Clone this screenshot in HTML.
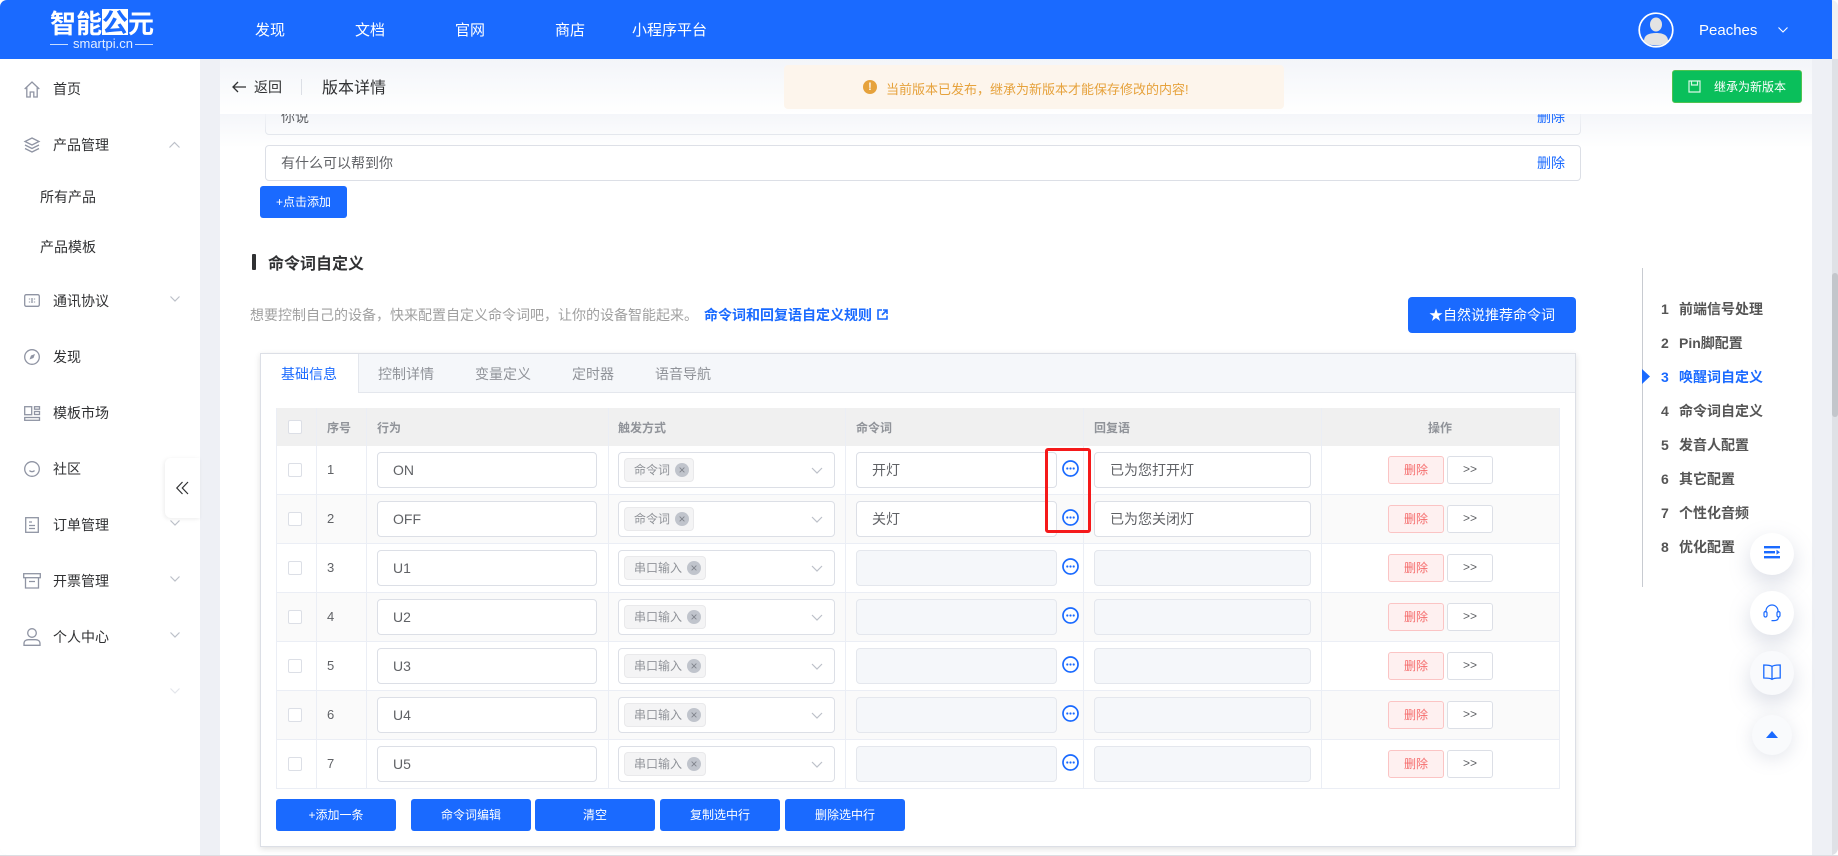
<!DOCTYPE html>
<html lang="zh-CN">
<head>
<meta charset="utf-8">
<title>版本详情</title>
<style>
*{box-sizing:border-box;margin:0;padding:0}
html,body{width:1838px;height:856px;overflow:hidden;background:#fff}
body{position:relative;font-family:"Liberation Sans","Noto Sans CJK SC",sans-serif;font-size:14px;color:#333}
.a{position:absolute}
.t{position:absolute;white-space:nowrap;line-height:20px;height:20px}
svg{position:absolute;display:block;overflow:visible}
#app{position:absolute;left:0;top:0;width:1838px;height:855px;overflow:hidden;border-radius:7px 7px 7px 7px;background:#eef0f5}
.nav{color:#fff;font-size:15px;top:21px}
.side{left:53px;color:#303133;font-size:14px}
.ico{fill:none;stroke:#8f94a3;stroke-width:1.3}
.chev{fill:none;stroke:#bcc0c9;stroke-width:1.2}
.row{position:absolute;left:276px;width:1284px;height:49px;border-bottom:1px solid #ebeef5;background:#fff}
.row.s{background:#fafafa}
.cb{position:absolute;left:12px;top:17px;width:14px;height:14px;border:1px solid #dcdfe6;border-radius:2px;background:#fff}
.num{position:absolute;left:51px;top:14px;line-height:20px;font-size:13px;color:#606266}
.in{position:absolute;top:6px;height:36px;border:1px solid #dcdfe6;border-radius:4px;background:#fff;font-size:14px;line-height:34px;color:#606266;white-space:nowrap}
.in.d{background:#f5f7fa;border-color:#e4e7ed}
.i1{left:101px;width:220px;padding-left:15px}
.i2{left:342px;width:217px}
.i3{left:580px;width:201px;padding-left:15px}
.i4{left:818px;width:217px;padding-left:15px}
.tag{position:absolute;left:348px;top:12px;height:24px;border:1px solid #e9e9eb;background:#f4f4f5;border-radius:4px;font-size:12px;line-height:23px;color:#909399;padding-left:9px;white-space:nowrap}
.tag i{position:absolute;top:4px;right:4px;width:14px;height:14px;border-radius:50%;background:#c0c4cc;color:#80848c;font-style:normal;font-size:12px;line-height:14px;text-align:center}
.tag.c{width:70px}
.tag.k{width:82px}
.sel{left:534px;top:21px}
.mo{left:786px;top:14px}
.del{position:absolute;left:1112px;top:10px;width:56px;height:28px;background:#fef0f0;border:1px solid #fbc4c4;border-radius:3px;color:#f56c6c;font-size:12px;line-height:26px;text-align:center}
.go{position:absolute;left:1171px;top:10px;width:46px;height:28px;background:#fff;border:1px solid #dcdfe6;border-radius:3px;color:#606266;font-size:12px;line-height:24px;text-align:center}
.th{top:418px;font-size:12px;color:#909399;font-weight:bold}
.vl{position:absolute;top:408px;width:1px;height:381px;background:#ebeef5}
.btn{position:absolute;background:#1a6aff;color:#fff;border-radius:3px;font-size:12px;text-align:center}
.bb{top:799px;height:32px;line-height:32px;width:120px}
.tab{top:364px;color:#909399;font-size:14px}
.rn{left:1661px;font-size:14px;font-weight:bold;color:#555}
.rl{left:1679px;font-size:14px;font-weight:bold;color:#555}
.fb{position:absolute;background:#fff;border-radius:50%;box-shadow:0 8px 22px rgba(120,130,160,.28)}
</style>
</head>
<body>
<div id="app">

<!-- content area -->
<div class="a" style="left:220px;top:59px;width:1592px;height:796px;background:#fff"></div>

<!-- phrase inputs -->
<div class="a" style="left:265px;top:99px;width:1316px;height:36px;border:1px solid #dcdfe6;border-radius:4px;background:#fff"></div>
<div class="a" style="left:265px;top:145px;width:1316px;height:36px;border:1px solid #dcdfe6;border-radius:4px;background:#fff"></div>
<div class="t" style="left:281px;top:153px;color:#606266">有什么可以帮到你</div>
<div class="t" style="left:1537px;top:153px;color:#1a6aff">删除</div>
<div class="btn" style="left:260px;top:186px;width:87px;height:32px;line-height:32px">+点击添加</div>

<!-- title -->
<div class="a" style="left:252px;top:254px;width:3.5px;height:16px;background:#303133;border-radius:1px"></div>
<div class="t" style="left:268px;top:255px;font-size:16px;font-weight:bold;color:#303133">命令词自定义</div>
<div class="t" style="left:250px;top:305px;color:#a0a0a0">想要控制自己的设备，快来配置自定义命令词吧，让你的设备智能起来。</div>
<div class="t" style="left:704px;top:305px;color:#1a6aff;font-weight:bold">命令词和回复语自定义规则</div>
<svg style="left:877px;top:309px" width="11" height="11" viewBox="0 0 11 11" fill="none" stroke="#1a6aff" stroke-width="1.6"><path d="M5 1H1v9h9V6.5M6 1h4v4M10 1L5 6"/></svg>
<div class="btn" style="left:1408px;top:297px;width:168px;height:36px;line-height:36px;font-size:14px;border-radius:4px">★自然说推荐命令词</div>

<!-- card -->
<div class="a" style="left:260px;top:353px;width:1316px;height:494px;background:#fff;border:1px solid #dcdfe6;box-shadow:0 2px 6px rgba(0,0,0,.12)"></div>
<div class="a" style="left:358px;top:354px;width:1217px;height:39px;background:#f5f7fa;border-bottom:1px solid #e4e7ed;border-left:1px solid #e4e7ed"></div>
<div class="t tab" style="left:281px;color:#1a6aff">基础信息</div>
<div class="t tab" style="left:378px">控制详情</div>
<div class="t tab" style="left:475px">变量定义</div>
<div class="t tab" style="left:572px">定时器</div>
<div class="t tab" style="left:655px">语音导航</div>

<!-- table head -->
<div class="a" style="left:276px;top:408px;width:1284px;height:38px;background:#f0f0f0"></div>
<div class="cb" style="left:288px;top:420px"></div>
<div class="t th" style="left:327px">序号</div>
<div class="t th" style="left:377px">行为</div>
<div class="t th" style="left:618px">触发方式</div>
<div class="t th" style="left:856px">命令词</div>
<div class="t th" style="left:1094px">回复语</div>
<div class="t th" style="left:1428px">操作</div>

<!-- rows -->
<div class="row" style="top:446px"><div class="cb"></div><div class="num">1</div><div class="in i1">ON</div><div class="in i2"></div><div class="tag c">命令词<i>×</i></div><svg class="sel" width="14" height="8" viewBox="0 0 14 8"><path d="M2 1l5 5 5-5" class="chev"/></svg><div class="in i3">开灯</div><svg class="mo" width="17" height="17" viewBox="0 0 17 17"><circle cx="8.5" cy="8.5" r="7.5" fill="#fff" stroke="#1a6aff" stroke-width="1.7"/><circle cx="5.3" cy="8.5" r="1.1" fill="#1a6aff"/><circle cx="8.5" cy="8.5" r="1.1" fill="#1a6aff"/><circle cx="11.7" cy="8.5" r="1.1" fill="#1a6aff"/></svg><div class="in i4">已为您打开灯</div><div class="del">删除</div><div class="go">&gt;&gt;</div></div>

<div class="row s" style="top:495px"><div class="cb"></div><div class="num">2</div><div class="in i1">OFF</div><div class="in i2"></div><div class="tag c">命令词<i>×</i></div><svg class="sel" width="14" height="8" viewBox="0 0 14 8"><path d="M2 1l5 5 5-5" class="chev"/></svg><div class="in i3">关灯</div><svg class="mo" width="17" height="17" viewBox="0 0 17 17"><circle cx="8.5" cy="8.5" r="7.5" fill="#fff" stroke="#1a6aff" stroke-width="1.7"/><circle cx="5.3" cy="8.5" r="1.1" fill="#1a6aff"/><circle cx="8.5" cy="8.5" r="1.1" fill="#1a6aff"/><circle cx="11.7" cy="8.5" r="1.1" fill="#1a6aff"/></svg><div class="in i4">已为您关闭灯</div><div class="del">删除</div><div class="go">&gt;&gt;</div></div>

<div class="row" style="top:544px"><div class="cb"></div><div class="num">3</div><div class="in i1">U1</div><div class="in i2"></div><div class="tag k">串口输入<i>×</i></div><svg class="sel" width="14" height="8" viewBox="0 0 14 8"><path d="M2 1l5 5 5-5" class="chev"/></svg><div class="in i3 d"></div><svg class="mo" width="17" height="17" viewBox="0 0 17 17"><circle cx="8.5" cy="8.5" r="7.5" fill="#fff" stroke="#1a6aff" stroke-width="1.7"/><circle cx="5.3" cy="8.5" r="1.1" fill="#1a6aff"/><circle cx="8.5" cy="8.5" r="1.1" fill="#1a6aff"/><circle cx="11.7" cy="8.5" r="1.1" fill="#1a6aff"/></svg><div class="in i4 d"></div><div class="del">删除</div><div class="go">&gt;&gt;</div></div>

<div class="row s" style="top:593px"><div class="cb"></div><div class="num">4</div><div class="in i1">U2</div><div class="in i2"></div><div class="tag k">串口输入<i>×</i></div><svg class="sel" width="14" height="8" viewBox="0 0 14 8"><path d="M2 1l5 5 5-5" class="chev"/></svg><div class="in i3 d"></div><svg class="mo" width="17" height="17" viewBox="0 0 17 17"><circle cx="8.5" cy="8.5" r="7.5" fill="#fff" stroke="#1a6aff" stroke-width="1.7"/><circle cx="5.3" cy="8.5" r="1.1" fill="#1a6aff"/><circle cx="8.5" cy="8.5" r="1.1" fill="#1a6aff"/><circle cx="11.7" cy="8.5" r="1.1" fill="#1a6aff"/></svg><div class="in i4 d"></div><div class="del">删除</div><div class="go">&gt;&gt;</div></div>

<div class="row" style="top:642px"><div class="cb"></div><div class="num">5</div><div class="in i1">U3</div><div class="in i2"></div><div class="tag k">串口输入<i>×</i></div><svg class="sel" width="14" height="8" viewBox="0 0 14 8"><path d="M2 1l5 5 5-5" class="chev"/></svg><div class="in i3 d"></div><svg class="mo" width="17" height="17" viewBox="0 0 17 17"><circle cx="8.5" cy="8.5" r="7.5" fill="#fff" stroke="#1a6aff" stroke-width="1.7"/><circle cx="5.3" cy="8.5" r="1.1" fill="#1a6aff"/><circle cx="8.5" cy="8.5" r="1.1" fill="#1a6aff"/><circle cx="11.7" cy="8.5" r="1.1" fill="#1a6aff"/></svg><div class="in i4 d"></div><div class="del">删除</div><div class="go">&gt;&gt;</div></div>

<div class="row s" style="top:691px"><div class="cb"></div><div class="num">6</div><div class="in i1">U4</div><div class="in i2"></div><div class="tag k">串口输入<i>×</i></div><svg class="sel" width="14" height="8" viewBox="0 0 14 8"><path d="M2 1l5 5 5-5" class="chev"/></svg><div class="in i3 d"></div><svg class="mo" width="17" height="17" viewBox="0 0 17 17"><circle cx="8.5" cy="8.5" r="7.5" fill="#fff" stroke="#1a6aff" stroke-width="1.7"/><circle cx="5.3" cy="8.5" r="1.1" fill="#1a6aff"/><circle cx="8.5" cy="8.5" r="1.1" fill="#1a6aff"/><circle cx="11.7" cy="8.5" r="1.1" fill="#1a6aff"/></svg><div class="in i4 d"></div><div class="del">删除</div><div class="go">&gt;&gt;</div></div>

<div class="row" style="top:740px"><div class="cb"></div><div class="num">7</div><div class="in i1">U5</div><div class="in i2"></div><div class="tag k">串口输入<i>×</i></div><svg class="sel" width="14" height="8" viewBox="0 0 14 8"><path d="M2 1l5 5 5-5" class="chev"/></svg><div class="in i3 d"></div><svg class="mo" width="17" height="17" viewBox="0 0 17 17"><circle cx="8.5" cy="8.5" r="7.5" fill="#fff" stroke="#1a6aff" stroke-width="1.7"/><circle cx="5.3" cy="8.5" r="1.1" fill="#1a6aff"/><circle cx="8.5" cy="8.5" r="1.1" fill="#1a6aff"/><circle cx="11.7" cy="8.5" r="1.1" fill="#1a6aff"/></svg><div class="in i4 d"></div><div class="del">删除</div><div class="go">&gt;&gt;</div></div>

<!-- column lines -->
<div class="vl" style="left:276px"></div>
<div class="vl" style="left:316px"></div>
<div class="vl" style="left:366px"></div>
<div class="vl" style="left:608px"></div>
<div class="vl" style="left:845px"></div>
<div class="vl" style="left:1083px"></div>
<div class="vl" style="left:1321px"></div>
<div class="vl" style="left:1559px"></div>

<!-- red highlight -->
<div class="a" style="left:1045px;top:448px;width:46px;height:85px;border:3px solid #f5191a;border-radius:3px"></div>

<!-- bottom buttons -->
<div class="btn bb" style="left:276px">+添加一条</div>
<div class="btn bb" style="left:411px">命令词编辑</div>
<div class="btn bb" style="left:535px">清空</div>
<div class="btn bb" style="left:660px">复制选中行</div>
<div class="btn bb" style="left:785px">删除选中行</div>

<!-- right anchor nav -->
<div class="a" style="left:1642px;top:268px;width:1px;height:319px;background:#c8cbd1"></div>
<svg style="left:1642px;top:369px" width="8" height="15" viewBox="0 0 8 15"><path d="M0 0l8 7.5L0 15z" fill="#1a6aff"/></svg>
<div class="t rn" style="top:299px">1</div><div class="t rl" style="top:299px">前端信号处理</div>
<div class="t rn" style="top:333px">2</div><div class="t rl" style="top:333px">Pin脚配置</div>
<div class="t rn" style="top:367px;color:#1a6aff">3</div><div class="t rl" style="top:367px;color:#1a6aff">唤醒词自定义</div>
<div class="t rn" style="top:401px">4</div><div class="t rl" style="top:401px">命令词自定义</div>
<div class="t rn" style="top:435px">5</div><div class="t rl" style="top:435px">发音人配置</div>
<div class="t rn" style="top:469px">6</div><div class="t rl" style="top:469px">其它配置</div>
<div class="t rn" style="top:503px">7</div><div class="t rl" style="top:503px">个性化音频</div>
<div class="t rn" style="top:537px">8</div><div class="t rl" style="top:537px">优化配置</div>

<!-- floating buttons -->
<div class="fb" style="left:1750px;top:533px;width:44px;height:42px"></div>
<svg style="left:1764px;top:546px" width="16" height="13" viewBox="0 0 16 13" fill="#1a6aff"><rect x="0" y="0" width="16" height="2.4"/><rect x="0" y="5" width="11" height="2.4"/><rect x="0" y="10" width="16" height="2.4"/><path d="M12.5 3.8l3.5 2.4-3.5 2.4z"/></svg>
<div class="fb" style="left:1750px;top:591px;width:44px;height:44px"></div>
<svg style="left:1763px;top:604px" width="18" height="18" viewBox="0 0 18 18" fill="none" stroke="#1a6aff" stroke-width="1.2"><path d="M3 8.5V7a6 6 0 0 1 12 0v1.5"/><rect x="1" y="7.5" width="3" height="5.5" rx="1.5"/><rect x="14" y="7.5" width="3" height="5.5" rx="1.5"/><path d="M15.5 13c0 2.5-2 3.600-4.500 3.600H8.500"/></svg>
<div class="fb" style="left:1750px;top:651px;width:44px;height:44px;background:#f9fafc"></div>
<svg style="left:1763px;top:664px" width="18" height="16" viewBox="0 0 18 16" fill="none" stroke="#1a6aff" stroke-width="1.3"><path d="M9 2.500C7.500 1.200 4 1 .8 1v13c3.200 0 6.700.2 8.200 1.300 1.500-1.100 5-1.300 8.200-1.300V1C14 1 10.500 1.200 9 2.500zM9 2.500v12.800"/></svg>
<div class="fb" style="left:1752px;top:715px;width:40px;height:40px;background:#f9fafc;box-shadow:0 4px 18px rgba(120,130,160,.2)"></div>
<svg style="left:1766px;top:731px" width="12" height="7" viewBox="0 0 12 7"><path d="M6 0l6 7H0z" fill="#1a6aff"/></svg>

<!-- shadow under sub header -->
<div class="a" style="left:220px;top:114px;width:1592px;height:34px;background:linear-gradient(#f3f5f9e6,#f3f5f900)"></div>
<div class="t" style="left:281px;top:107px;color:#606266">你说</div>
<div class="t" style="left:1537px;top:107px;color:#1a6aff">删除</div>

<!-- sub header -->
<div class="a" style="left:220px;top:59px;width:1592px;height:55px;background:linear-gradient(#f3f5f9,#fff)"></div>
<svg style="left:232px;top:81px" width="14" height="12" viewBox="0 0 14 12" fill="none" stroke="#303133" stroke-width="1.3"><path d="M14 6H1M6 1L1 6l5 5"/></svg>
<div class="t" style="left:254px;top:77px;color:#303133">返回</div>
<div class="a" style="left:301px;top:79px;width:1px;height:16px;background:#dcdfe6"></div>
<div class="t" style="left:322px;top:79px;font-size:16px;color:#303133">版本详情</div>
<div class="a" style="left:784px;top:65px;width:500px;height:44px;background:#fdf5ec;border-radius:4px"></div>
<div class="a" style="left:863px;top:80px;width:14px;height:14px;border-radius:50%;background:#e6a23c;color:#fdf5ec;font-size:11px;line-height:14px;text-align:center;font-weight:bold">!</div>
<div class="t" style="left:886px;top:80px;font-size:13px;color:#e6a23c">当前版本已发布，继承为新版本才能保存修改的内容!</div>
<div class="a" style="left:1672px;top:70px;width:130px;height:33px;background:#0abf5b;border:1px solid #4fc24f;border-radius:3px"></div>
<svg style="left:1688px;top:80px" width="13" height="13" viewBox="0 0 13 13" fill="none" stroke="#d9f7e6" stroke-width="1.2"><path d="M1 1h11v11H1zM3.500 1v4h6V1"/></svg>
<div class="t" style="left:1714px;top:77px;font-size:12px;color:#fff">继承为新版本</div>

<!-- sidebar -->
<div class="a" style="left:0;top:59px;width:200px;height:796px;background:#fff"></div>
<svg class="ico" style="left:24px;top:81px" width="16" height="17" viewBox="0 0 16 17"><path d="M.7 8L8 1l7.300 7M2.800 6.500V16h3.400v-5h3.600v5h3.400V6.500"/></svg>
<div class="t side" style="top:79px">首页</div>
<svg class="ico" style="left:24px;top:137px" width="16" height="16" viewBox="0 0 16 16"><path d="M8 1l7 3.500L8 8 1 4.500zM1 8l7 3.500L15 8M1 11.500L8 15l7-3.500"/></svg>
<div class="t side" style="top:135px">产品管理</div>
<svg class="chev" style="left:169px;top:142px" width="11" height="6" viewBox="0 0 11 6"><path d="M.500 5.500l5-5 5 5"/></svg>
<div class="t side" style="left:40px;top:187px">所有产品</div>
<div class="t side" style="left:40px;top:237px">产品模板</div>

<svg class="ico" style="left:24px;top:294px" width="16" height="13" viewBox="0 0 16 13"><rect x=".7" y=".7" width="14.600" height="11.600" rx="1.500"/><path d="M5.500 4.500v1M5.500 7.500v1M8 4v5M10.500 4.500v1M10.500 7.500v1"/></svg>
<div class="t side" style="top:291px">通讯协议</div>
<svg class="chev" style="left:170px;top:296px" width="10" height="6" viewBox="0 0 10 6"><path d="M.500.500l4.500 4.500L9.500.500"/></svg>

<svg class="ico" style="left:24px;top:349px" width="16" height="16" viewBox="0 0 16 16"><circle cx="8" cy="8" r="7.300"/><path d="M5.500 10.500l1.500-4 4-1.500-1.500 4z" fill="#8f94a3" stroke="none"/></svg>
<div class="t side" style="top:347px">发现</div>

<svg class="ico" style="left:24px;top:406px" width="16" height="15" viewBox="0 0 16 15"><rect x=".7" y=".7" width="7" height="8"/><rect x="10.500" y=".7" width="5" height="2.500"/><rect x="10.500" y="5.500" width="5" height="3"/><rect x=".7" y="11.500" width="14.800" height="2.800"/></svg>
<div class="t side" style="top:403px">模板市场</div>

<svg class="ico" style="left:24px;top:461px" width="16" height="16" viewBox="0 0 16 16"><circle cx="8" cy="8" r="7.300"/><path d="M5.500 9.500c1 1.500 4 1.500 5 0"/></svg>
<div class="t side" style="top:459px">社区</div>

<svg class="ico" style="left:25px;top:517px" width="14" height="16" viewBox="0 0 14 16"><rect x=".7" y=".7" width="12.600" height="14.600"/><path d="M4 5h3M4 8.500h6M4 11.500h6"/></svg>
<div class="t side" style="top:515px">订单管理</div>
<svg class="chev" style="left:170px;top:520px" width="10" height="6" viewBox="0 0 10 6"><path d="M.500.500l4.500 4.500L9.500.500"/></svg>

<svg class="ico" style="left:23px;top:573px" width="18" height="16" viewBox="0 0 18 16"><rect x=".7" y=".7" width="16.600" height="4"/><path d="M2.500 4.700V15h13V4.700M6 8.500h6"/></svg>
<div class="t side" style="top:571px">开票管理</div>
<svg class="chev" style="left:170px;top:576px" width="10" height="6" viewBox="0 0 10 6"><path d="M.500.500l4.500 4.500L9.500.500"/></svg>

<svg class="ico" style="left:23px;top:628px" width="18" height="18" viewBox="0 0 18 18"><circle cx="9" cy="5" r="4.300"/><path d="M1 17.300v-1.800c0-2.500 2-3.800 4.500-3.800h7c2.500 0 4.500 1.300 4.500 3.800v1.800z"/></svg>
<div class="t side" style="top:627px">个人中心</div>
<svg class="chev" style="left:170px;top:632px" width="10" height="6" viewBox="0 0 10 6"><path d="M.500.500l4.500 4.500L9.500.500"/></svg>
<svg class="chev" style="left:170px;top:688px;stroke:#e4e6eb" width="10" height="6" viewBox="0 0 10 6"><path d="M.500.500l4.500 4.500L9.500.500"/></svg>

<!-- collapse -->
<div class="a" style="left:165px;top:458px;width:35px;height:60px;background:#fff;border-radius:6px 0 0 6px;box-shadow:-1px 1px 4px rgba(0,0,0,.08)"></div>
<svg style="left:176px;top:481px" width="13" height="14" viewBox="0 0 13 14" fill="none" stroke="#303133" stroke-width="1.200"><path d="M6.500 1L.8 7l5.700 6M12 1L6.300 7l5.700 6"/></svg>

<!-- top header -->
<div class="a" style="left:0;top:0;width:1832px;height:59px;background:#1a6aff"></div>
<div class="t" style="left:50px;top:8px;height:30px;line-height:30px;font-size:26px;font-weight:bold;color:#fff;font-family:'Noto Sans CJK SC',sans-serif;letter-spacing:0">智能<span style="display:inline-block;background:#fff;color:#1a6aff;height:26px;line-height:26px;vertical-align:1px">公</span>元</div>
<div class="a" style="left:50px;top:44px;width:18px;height:1px;background:#c7dcff"></div>
<div class="a" style="left:135px;top:44px;width:18px;height:1px;background:#c7dcff"></div>
<div class="t" style="left:73px;top:34px;font-size:13px;color:#e3eeff">smartpi.cn</div>
<div class="t nav" style="left:255px">发现</div>
<div class="t nav" style="left:355px">文档</div>
<div class="t nav" style="left:455px">官网</div>
<div class="t nav" style="left:555px">商店</div>
<div class="t nav" style="left:632px">小程序平台</div>
<svg style="left:1638px;top:12px" width="36" height="36" viewBox="0 0 36 36"><circle cx="18" cy="18" r="16.800" fill="#1a6aff" stroke="#fff" stroke-width="1.700"/><ellipse cx="18" cy="12.500" rx="6" ry="7" fill="#e3e3e3"/><path d="M6 29c0-6 5-8 12-8s12 2 12 8c-3 3-7 4.500-12 4.500S9 32 6 29z" fill="#e3e3e3"/></svg>
<div class="t" style="left:1699px;top:21px;color:#fff;font-size:15px">Peaches</div>
<svg style="left:1778px;top:27px" width="10" height="6" viewBox="0 0 10 6" fill="none" stroke="#fff" stroke-width="1.100"><path d="M.5.500l4.500 4.500L9.500.500"/></svg>

<!-- scrollbar -->
<div class="a" style="left:1832px;top:0;width:6px;height:59px;background:#f1f1f3"></div>
<div class="a" style="left:1832px;top:59px;width:6px;height:796px;background:#dfe1e6"></div>
<div class="a" style="left:1832px;top:273px;width:6px;height:144px;background:#c3c6cb;border-radius:3px"></div>
</div>
<div class="a" style="left:0;top:855px;width:1838px;height:1px;background:#dcdee3"></div>
</body>
</html>
